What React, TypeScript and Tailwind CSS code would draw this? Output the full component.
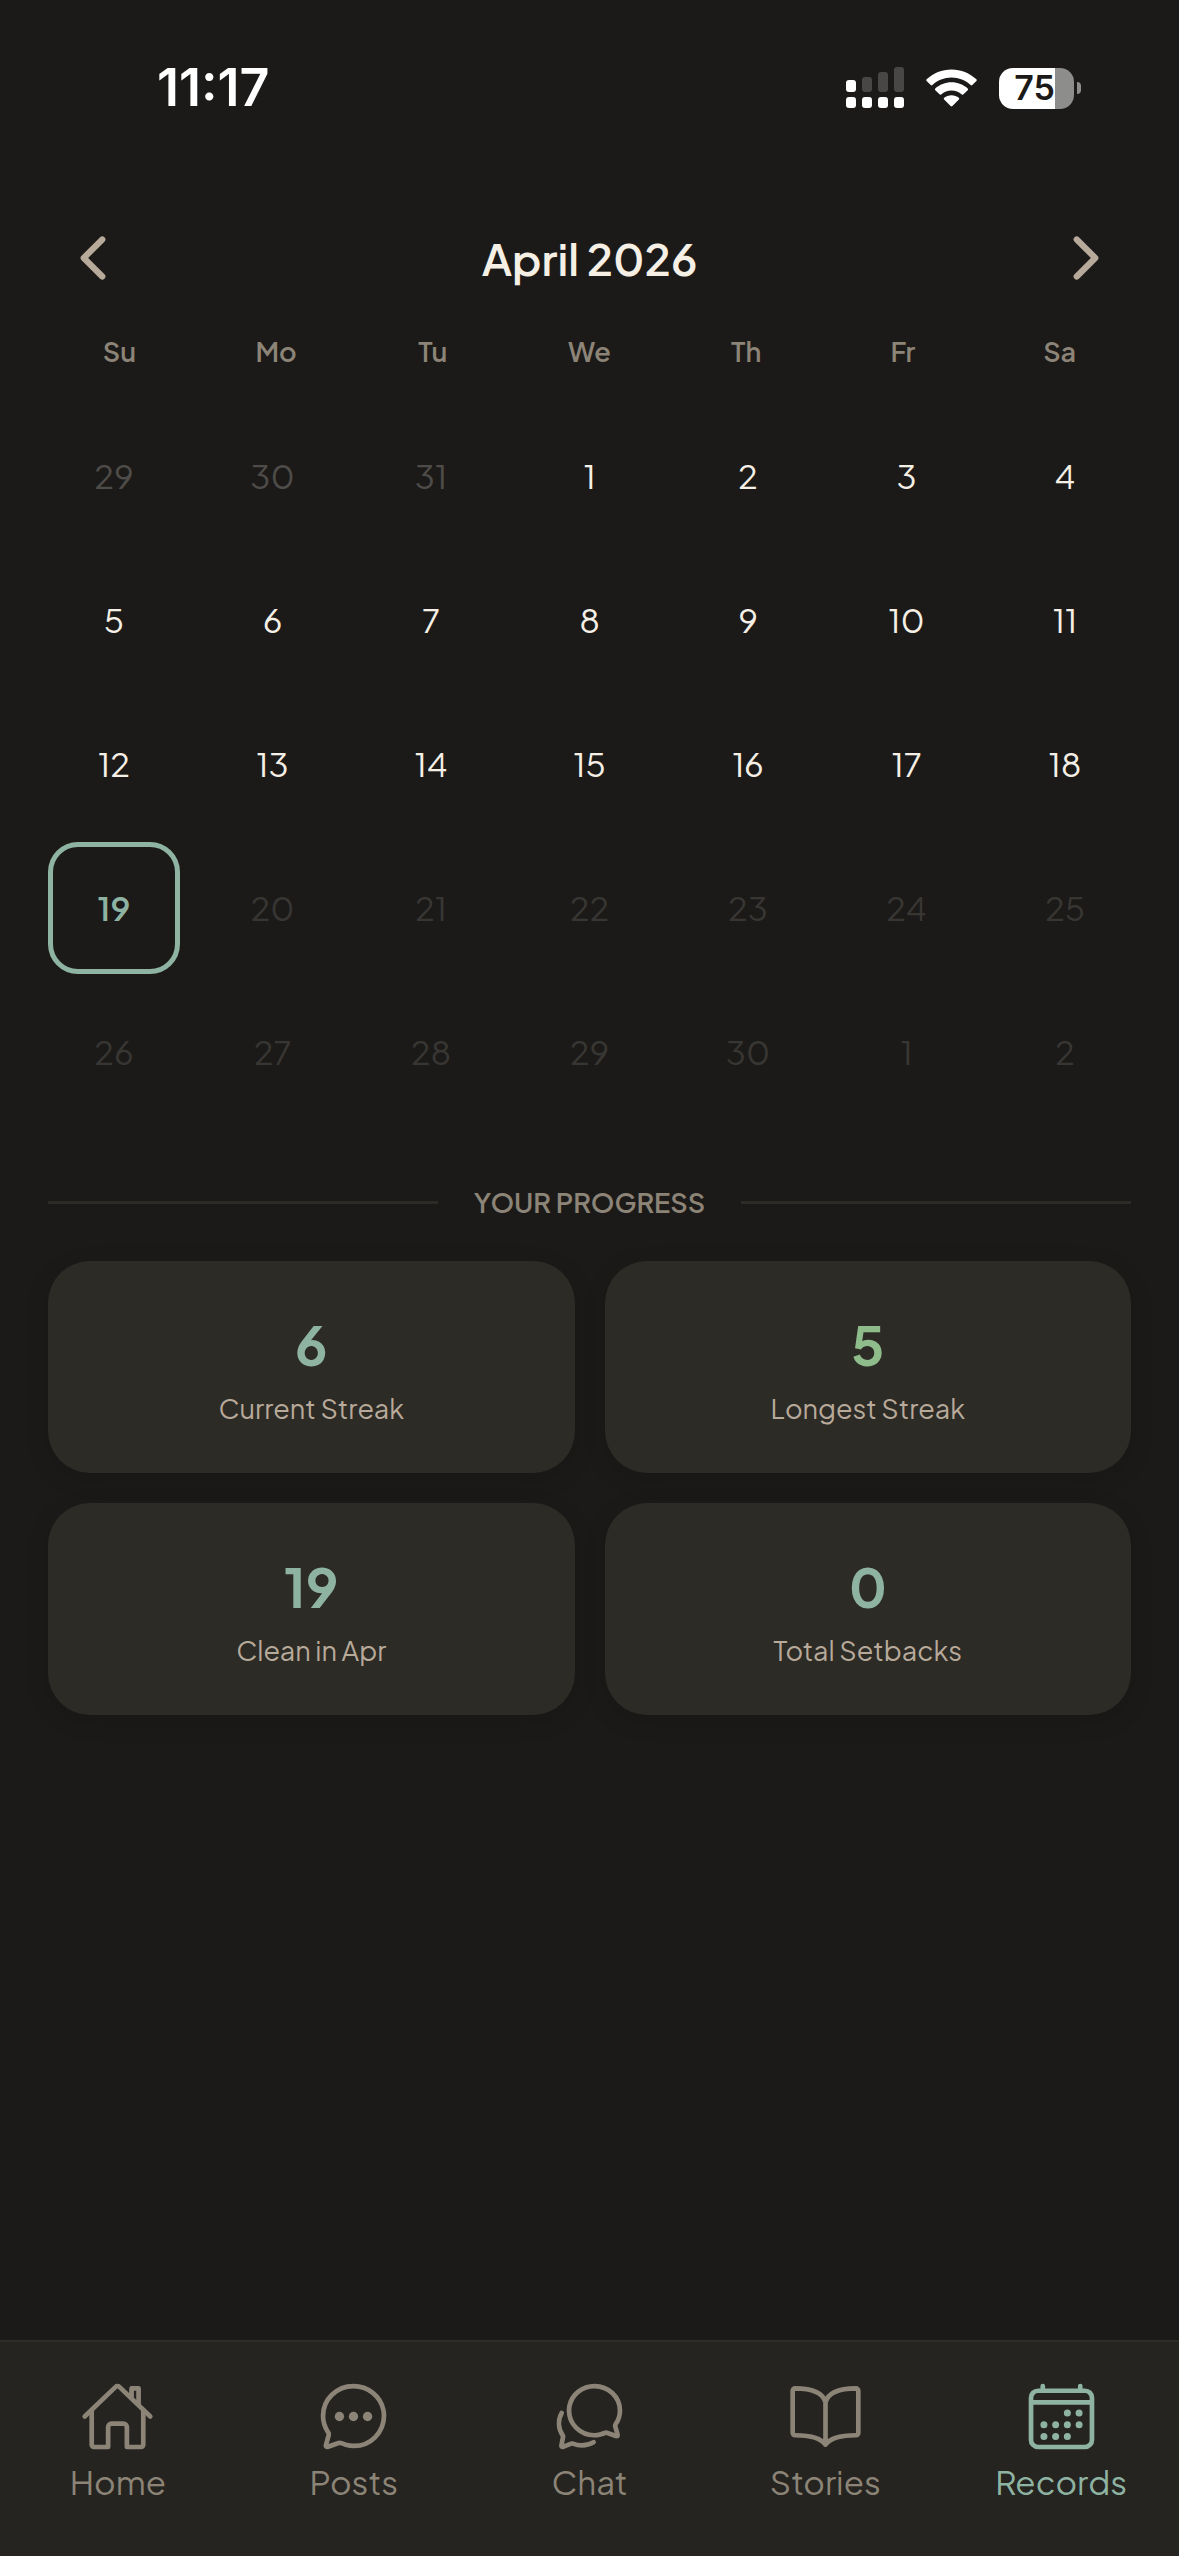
import {
  IoBookOutline,
  IoCalendarOutline,
  IoChatbubbleEllipsesOutline,
  IoChatbubblesOutline,
  IoChevronBack,
  IoChevronForward,
  IoHomeOutline,
} from 'react-icons/io5';

const weekdays = ['Su', 'Mo', 'Tu', 'We', 'Th', 'Fr', 'Sa'];

type DayKind = 'past' | 'normal' | 'today' | 'future';

const tones: Record<DayKind, string> = {
  past: 'text-[#4e4c48] font-normal',
  normal: 'text-[#f5efe6] font-normal',
  today: 'rounded-[30px] border-[5px] border-[#8fb3a3] text-[#8fb3a3] font-semibold',
  future: 'text-[#383633] font-normal',
};

const days: { n: number; kind: DayKind }[] = Array.from({ length: 35 }, (_, i) => {
  if (i < 3) return { n: 29 + i, kind: 'past' };
  const d = i - 2;
  if (d > 30) return { n: d - 30, kind: 'future' };
  return { n: d, kind: d < 19 ? 'normal' : d === 19 ? 'today' : 'future' };
});

const weeks = [0, 1, 2, 3, 4].map((w) => days.slice(w * 7, w * 7 + 7));

const stats = [
  { value: 6, label: 'Current Streak', tone: 'text-[#8fb3a3]' },
  { value: 5, label: 'Longest Streak', tone: 'text-[#8fbc8b]' },
  { value: 19, label: 'Clean in Apr', tone: 'text-[#8fb3a3]' },
  { value: 0, label: 'Total Setbacks', tone: 'text-[#8fb3a3]' },
];

const tabs = [
  { label: 'Home', Icon: IoHomeOutline },
  { label: 'Posts', Icon: IoChatbubbleEllipsesOutline },
  { label: 'Chat', Icon: IoChatbubblesOutline },
  { label: 'Stories', Icon: IoBookOutline },
  { label: 'Records', Icon: IoCalendarOutline, active: true },
];

function Signal() {
  return (
    <svg width="58" height="42" viewBox="0 0 58 42" aria-hidden="true">
      <g fill="#fff">
        <rect x="0" y="13" width="10" height="12" rx="3" />
        <rect x="0" y="30" width="10" height="11" rx="3" />
        <rect x="16" y="30" width="10" height="11" rx="3" />
        <rect x="32" y="30" width="10" height="11" rx="3" />
        <rect x="48" y="30" width="10" height="11" rx="3" />
      </g>
      <g fill="#484745">
        <rect x="16" y="10" width="10" height="15" rx="3" />
        <rect x="32" y="5" width="10" height="20" rx="3" />
        <rect x="48" y="0" width="10" height="25" rx="3" />
      </g>
    </svg>
  );
}

function Wifi() {
  return (
    <svg width="51" height="38" viewBox="0 0 51 38" fill="#fff" aria-hidden="true">
      <path d="M25.5 0.5C35 0.5 43.8 4.2 50.4 10.3C50.9 10.8 50.9 11.5 50.4 12L46.3 16C45.8 16.5 45.1 16.5 44.6 16C39.5 11.3 32.8 8.5 25.5 8.5C18.2 8.5 11.5 11.3 6.4 16C5.9 16.5 5.2 16.5 4.7 16L0.6 12C0.1 11.5 0.1 10.8 0.6 10.3C7.2 4.2 16 0.5 25.5 0.5Z" />
      <path d="M25.5 13.3C31.7 13.3 37.4 15.7 41.7 19.5C42.2 20 42.2 20.7 41.7 21.2L37.5 25.3C37 25.8 36.3 25.8 35.8 25.4C33 23 29.4 21.5 25.5 21.5C21.6 21.5 18 23 15.2 25.4C14.7 25.8 14 25.8 13.5 25.3L9.3 21.2C8.8 20.7 8.8 20 9.3 19.5C13.6 15.7 19.3 13.3 25.5 13.3Z" />
      <path d="M25.5 26.2C28.3 26.2 30.8 27.2 32.8 28.8C33.4 29.3 33.4 30 32.9 30.5L26.4 37.1C25.9 37.6 25.1 37.6 24.6 37.1L18.1 30.5C17.6 30 17.6 29.3 18.2 28.8C20.2 27.2 22.7 26.2 25.5 26.2Z" />
    </svg>
  );
}

function Battery() {
  return (
    <div className="flex items-center gap-[3px]" role="img" aria-label="Battery 75%">
      <div className="flex h-[41px] w-[75px] items-center justify-center rounded-[14px] bg-linear-to-r from-white from-75% to-[#8d8d8b] to-75% pr-1 text-[34px] leading-none font-semibold text-[#1b1a18]">
        75
      </div>
      <div className="h-3 w-1 rounded-r-full bg-[#8d8d8b]" />
    </div>
  );
}

export default function App() {
  return (
    <div className="flex min-h-screen flex-col bg-[#1b1a18] font-['Plus_Jakarta_Sans',Inter,sans-serif] text-[#f5efe6]">
      <header className="flex h-[176px] items-center justify-between pr-[98px] pl-[157px] font-[Inter,sans-serif] text-white">
        <time className="text-[52px] leading-none font-semibold">11:17</time>
        <div className="flex items-center gap-[22px]">
          <Signal />
          <Wifi />
          <Battery />
        </div>
      </header>

      <main className="flex-1 px-12">
        <div className="mt-[49px] flex h-[66px] items-center justify-between px-3">
          <button type="button" aria-label="Previous month" className="text-[#b8aa9a]">
            <IoChevronBack size={66} />
          </button>
          <h1 className="text-[44px] leading-none font-semibold">April 2026</h1>
          <button type="button" aria-label="Next month" className="text-[#b8aa9a]">
            <IoChevronForward size={66} />
          </button>
        </div>

        <div className="-mx-[7px] mt-10 grid grid-cols-7 text-center text-[27px] leading-10 font-semibold text-[#8c8477]">
          {weekdays.map((d) => (
            <span key={d}>{d}</span>
          ))}
        </div>

        <div className="mt-[39px] flex flex-col gap-3">
          {weeks.map((week, w) => (
            <div key={w} className="flex justify-between">
              {week.map(({ n, kind }) => (
                <button
                  key={n}
                  type="button"
                  className={`flex size-[132px] items-center justify-center text-[33px] ${tones[kind]}`}
                >
                  {n}
                </button>
              ))}
            </div>
          ))}
        </div>

        <div className="mt-16 flex items-center gap-9">
          <div className="h-[3px] flex-1 bg-[#2d2b26]" />
          <h2 className="text-[27px] leading-10 font-semibold text-[#8c8477]">YOUR PROGRESS</h2>
          <div className="h-[3px] flex-1 bg-[#2d2b26]" />
        </div>

        <div className="mt-[39px] grid grid-cols-2 gap-[30px]">
          {stats.map(({ value, label, tone }) => (
            <div
              key={label}
              className="flex flex-col items-center rounded-[42px] bg-[#2d2b26] pt-10 pb-11 shadow-[0_6px_24px_rgba(0,0,0,0.12)]"
            >
              <span className={`text-[54px] leading-[86px] font-bold ${tone}`}>{value}</span>
              <span className="text-[27px] leading-[42px] font-normal text-[#b8aa9a]">{label}</span>
            </div>
          ))}
        </div>
      </main>

      <nav className="grid grid-cols-5 border-t-2 border-[#2f2d2a] bg-[#252420] pt-[37px] pb-[54px]">
        {tabs.map(({ label, Icon, active }) => (
          <a
            key={label}
            href={`#${label.toLowerCase()}`}
            aria-current={active ? 'page' : undefined}
            className={`flex flex-col items-center gap-2 text-[33px] leading-10 font-normal ${active ? 'text-[#8fb3a3]' : 'text-[#8c8477]'}`}
          >
            <Icon size={75} />
            {label}
          </a>
        ))}
      </nav>
    </div>
  );
}
